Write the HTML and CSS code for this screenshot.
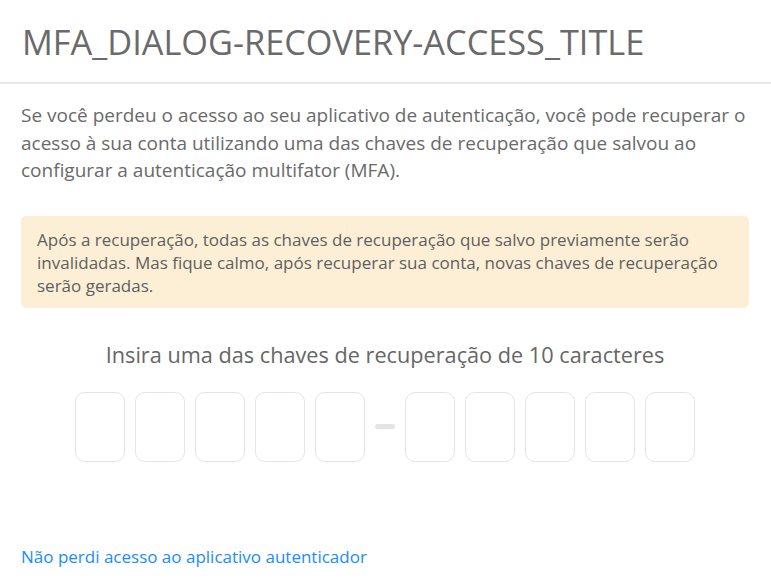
FILE: index.html
```html
<!DOCTYPE html>
<html lang="pt-BR">
<head>
<meta charset="utf-8">
<title>MFA recovery</title>
<link rel="stylesheet" href="styles.css">
</head>
<body>
<div class="dialog">
  <header class="dialog-header">
    <h1 class="dialog-title">MFA_DIALOG-RECOVERY-ACCESS_TITLE</h1>
  </header>
  <main class="dialog-body">
    <p class="intro">Se você perdeu o acesso ao seu aplicativo de autenticação, você pode recuperar o acesso à sua conta utilizando uma das chaves de recuperação que salvou ao configurar a autenticação multifator (MFA).</p>
    <div class="warning">Após a recuperação, todas as chaves de recuperação que salvo previamente serão invalidadas. Mas fique calmo, após recuperar sua conta, novas chaves de recuperação serão geradas.</div>
    <h2 class="code-label">Insira uma das chaves de recuperação de 10 caracteres</h2>
    <div class="code-row">
      <div class="code-group">
        <input class="code-box" maxlength="1" aria-label="1">
        <input class="code-box" maxlength="1" aria-label="2">
        <input class="code-box" maxlength="1" aria-label="3">
        <input class="code-box" maxlength="1" aria-label="4">
        <input class="code-box" maxlength="1" aria-label="5">
      </div>
      <span class="code-dash"></span>
      <div class="code-group">
        <input class="code-box" maxlength="1" aria-label="6">
        <input class="code-box" maxlength="1" aria-label="7">
        <input class="code-box" maxlength="1" aria-label="8">
        <input class="code-box" maxlength="1" aria-label="9">
        <input class="code-box" maxlength="1" aria-label="10">
      </div>
    </div>
    <a class="link" href="#">Não perdi acesso ao aplicativo autenticador</a>
  </main>
</div>
</body>
</html>
```
FILE: styles.css
```css
html, body {
  margin: 0;
  padding: 0;
  background: #ffffff;
}
body {
  font-family: "Open Sans", "Noto Sans", sans-serif;
  color: #666666;
}
.dialog-header {
  box-sizing: border-box;
  height: 84px;
  border-bottom: 2px solid #e8e8e8;
  padding: 0 22px;
  display: flex;
  align-items: center;
}
.dialog-title {
  margin: 0;
  font-size: 34.3px;
  font-weight: 400;
  color: #6a6a6a;
}
.dialog-body {
  padding: 18px 22px 0 21px;
}
.intro {
  margin: 0;
  font-size: 19px;
  line-height: 27.5px;
  color: #6a6a6a;
}
.warning {
  margin-top: 31px;
  background: #fdefd6;
  border-radius: 5px;
  padding: 12px 16px 11px 16px;
  font-size: 17px;
  line-height: 23px;
  color: #5f5f5f;
}
.code-label {
  margin: 33px 0 0 0;
  text-align: center;
  font-size: 21.7px;
  line-height: 28px;
  font-weight: 500;
  color: #666666;
}
.code-row {
  margin-top: 23px;
  display: flex;
  justify-content: center;
  align-items: center;
  gap: 10px;
}
.code-group {
  display: flex;
  gap: 10px;
}
.code-box {
  width: 50px;
  height: 70px;
  box-sizing: border-box;
  border: 1px solid #e4e4e4;
  border-radius: 10px;
  background: #ffffff;
  padding: 0;
  font: inherit;
  text-align: center;
}
.code-dash {
  display: block;
  width: 20px;
  height: 5px;
  border-radius: 3px;
  background: #e4e4e4;
}
.link {
  display: inline-block;
  margin-top: 84px;
  font-size: 17px;
  line-height: 22px;
  font-weight: 500;
  color: #1a8cff;
  text-decoration: none;
}
```
